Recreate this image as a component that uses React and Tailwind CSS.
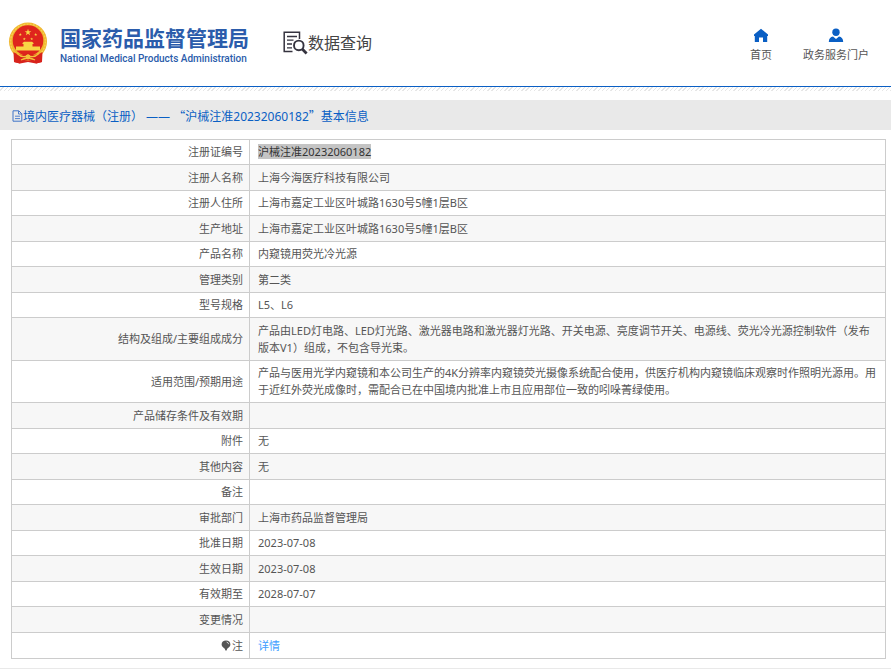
const rows = [
    { label: '注册证编号', value: '沪械注准20232060182', marked: true },
    { label: '注册人名称', value: '上海今海医疗科技有限公司' },
    { label: '注册人住所', value: '上海市嘉定工业区叶城路1630号5幢1层B区' },
    { label: '生产地址', value: '上海市嘉定工业区叶城路1630号5幢1层B区' },
    { label: '产品名称', value: '内窥镜用荧光冷光源' },
    { label: '管理类别', value: '第二类' },
    { label: '型号规格', value: 'L5、L6' },
    { label: '结构及组成/主要组成成分', value: '产品由LED灯电路、LED灯光路、激光器电路和激光器灯光路、开关电源、亮度调节开关、电源线、荧光冷光源控制软件（发布版本V1）组成，不包含导光束。', tall: true },
    { label: '适用范围/预期用途', value: '产品与医用光学内窥镜和本公司生产的4K分辨率内窥镜荧光摄像系统配合使用，供医疗机构内窥镜临床观察时作照明光源用。用于近红外荧光成像时，需配合已在中国境内批准上市且应用部位一致的吲哚菁绿使用。' },
    { label: '产品储存条件及有效期', value: '' },
    { label: '附件', value: '无' },
    { label: '其他内容', value: '无' },
    { label: '备注', value: '' },
    { label: '审批部门', value: '上海市药品监督管理局' },
    { label: '批准日期', value: '2023-07-08' },
    { label: '生效日期', value: '2023-07-08' },
    { label: '有效期至', value: '2028-07-07' },
    { label: '变更情况', value: '' },
];

const STAR = 'M0 -1 L0.24 -0.31 L0.95 -0.31 L0.37 0.12 L0.59 0.81 L0 0.39 L-0.59 0.81 L-0.37 0.12 L-0.95 -0.31 L-0.24 -0.31 Z';

function Emblem() {
    return (
        <svg viewBox="0 0 40 42" className="w-10 h-[42px] shrink-0" aria-hidden="true">
            <path d="M7 30 L33 30 L34 40 L28 41.5 L20 40 L12 41.5 L6 40 Z" fill="#d8231c" />
            <circle cx="20" cy="19.5" r="19" fill="#f0b62e" />
            <circle cx="20" cy="19.5" r="17.4" fill="none" stroke="#f7cf50" strokeWidth="1.4" strokeDasharray="2 1.2" />
            <circle cx="20" cy="18.5" r="15.3" fill="#df251d" />
            <g fill="#f8d545">
                <path d={STAR} transform="translate(20 10.3) scale(3.5)" />
                <path d={STAR} transform="translate(12.3 12.6) scale(1.6)" />
                <path d={STAR} transform="translate(27.7 12.6) scale(1.6)" />
                <path d={STAR} transform="translate(16.3 17) scale(1.6)" />
                <path d={STAR} transform="translate(23.7 17) scale(1.6)" />
                <path d="M14.5 21 L16 19.8 H24 L25.5 21 V22 H24.5 V24.5 H32 V28.6 H8 V24.5 H15.5 V22 H14.5 Z" />
            </g>
            <path d="M5.5 30 Q12 35 20 31 Q28 35 34.5 30 L34 40 L28 41.5 L26 37 Q20 39 14 37 L12 41.5 L6 40 Z" fill="#d8231c" />
            <path d="M9 31.5 Q15 37 20 33 Q25 37 31 31.5" fill="none" stroke="#f3c23a" strokeWidth="1.3" />
            <path d="M13 38 Q20 34 27 38" fill="none" stroke="#f3c23a" strokeWidth="1.3" />
            <circle cx="20" cy="35" r="2.4" fill="#f3c23a" />
        </svg>
    );
}

function SearchDocIcon() {
    return (
        <svg viewBox="0 0 25 24" className="w-[25px] h-6 shrink-0" fill="none" stroke="#35333f" aria-hidden="true">
            <path d="M16.5 8 V1.2 H1.2 V20.5 H9.5" strokeWidth="1.5" />
            <path d="M4 5.5 H14 M4 9.2 H10.5 M4 13 H9 M4 16.8 H9" strokeWidth="1.3" />
            <circle cx="15.8" cy="14.4" r="4.8" strokeWidth="1.9" />
            <path d="M19.2 18 L23.6 22.4" strokeWidth="2.8" />
        </svg>
    );
}

function DocIcon() {
    return (
        <svg viewBox="0 0 11 12" className="w-[11px] h-3 shrink-0" fill="none" stroke="#3f74c8" aria-hidden="true">
            <path d="M1 0.8 H6.8 L9.8 3.8 V11.2 H1 Z" />
            <path d="M6.5 1 V4 H9.6 M3 6.2 H8 M3 8.6 H8" strokeWidth="0.9" />
        </svg>
    );
}

function BulbIcon() {
    return (
        <svg viewBox="0 0 10 11" className="inline-block w-[10px] h-[11px] mr-px align-[-1px]" aria-hidden="true">
            <path d="M5 0.5 C7.6 0.5 9.4 2.2 9.4 4.4 C9.4 6.6 7.2 7.6 6.2 8.8 L5.6 10.4 H4.4 L3.8 8.8 C2.8 7.6 0.6 6.6 0.6 4.4 C0.6 2.2 2.4 0.5 5 0.5 Z" fill="#555" />
            <path d="M5.6 2 Q7.4 2.4 7.7 4.2" fill="none" stroke="#fff" strokeWidth="0.7" />
        </svg>
    );
}

function Header() {
    return (
        <header>
            <div className="flex items-center h-[86px] pl-2 pr-[22px]">
                <a href="#" className="flex items-center gap-3">
                    <Emblem />
                    <div className="pt-[3px] text-[#2b5cab] whitespace-nowrap">
                        <div className="text-[21px] leading-7 font-bold">国家药品监督管理局</div>
                        <div className="font-[Roboto] text-[10px] leading-[14px] font-medium">National Medical Products Administration</div>
                    </div>
                </a>
                <div className="flex items-center ml-[34px] text-[#444]">
                    <SearchDocIcon />
                    <span className="text-[16px] leading-6 whitespace-nowrap">数据查询</span>
                </div>
                <nav className="flex gap-[31px] ml-auto pt-1 whitespace-nowrap text-[11px] leading-4 text-[#555]">
                    <a href="#" className="flex flex-col items-center gap-1">
                        <svg viewBox="0 0 16 15" className="w-4 h-[15px]" fill="#0a5fc4" aria-hidden="true">
                            <path d="M8 0.8 L15 6.5 V8 H14.2 V14 H10 V9.5 H6 V14 H1.8 V8 H1 V6.5 Z" />
                        </svg>
                        首页
                    </a>
                    <a href="#" className="flex flex-col items-center gap-1">
                        <svg viewBox="0 0 16 15" className="w-4 h-[15px]" fill="#0a5fc4" aria-hidden="true">
                            <circle cx="8" cy="4.3" r="3.7" />
                            <path d="M0.8 14 C0.8 10.8 2.4 9 5 8.5 L8 11 L11 8.5 C13.6 9 15.2 10.8 15.2 14 Z" />
                        </svg>
                        政务服务门户
                    </a>
                </nav>
            </div>
            <div className="h-px bg-[#0a5fc4]" />
            <div className="h-1 bg-[repeating-linear-gradient(135deg,#fff_0px,#fff_2px,#e6e6e6_2px,#e6e6e6_3px)]" />
        </header>
    );
}

function App() {
    return (
        <div className="bg-white text-[#555] font-['Noto_Sans','Noto_Sans_CJK_SC',sans-serif]">
            <Header />

            <h1 className="flex items-center mt-[9px] h-[30px] pt-0.5 pl-3 bg-[#e9e9e9] text-[12px] leading-4 text-[#0a5fc4]">
                <DocIcon />
                <span>
                    境内医疗器械（注册） ——{' '}
                    <span className="font-['Noto_Sans_CJK_SC',sans-serif]">“</span>
                    沪械注准20232060182
                    <span className="font-['Noto_Sans_CJK_SC',sans-serif]">”</span>
                    基本信息
                </span>
            </h1>

            <main className="pt-[9px] pl-[11px] pr-[5px] pb-[9px] border-b border-[#e9e9e9]">
                <table className="w-full table-fixed border-collapse border border-[#ccc] text-[11px] leading-[17px]">
                    <colgroup>
                        <col className="w-[238px]" />
                        <col />
                    </colgroup>
                    <tbody>
                        {rows.map((row) => (
                            <tr key={row.label} className={`even:bg-[#f7f7f7] ${row.tall ? 'h-[43px]' : 'even:h-[26px]'}`}>
                                <th scope="row" className="border border-[#ccc] pt-[3px] pb-1 pl-2 pr-[6px] text-right font-normal">{row.label}</th>
                                <td className="border border-[#ccc] pt-[3px] pb-1 pl-2 pr-[6px] break-all">
                                    {row.marked ? <mark className="bg-[#c4c4c4] text-[#333]">{row.value}</mark> : row.value}
                                </td>
                            </tr>
                        ))}
                        <tr className="h-[26px]">
                            <th scope="row" className="border border-[#ccc] pt-[3px] pb-1 pl-2 pr-[6px] text-right font-normal">
                                <BulbIcon />注
                            </th>
                            <td className="border border-[#ccc] pt-[3px] pb-1 pl-2 pr-[6px]">
                                <a href="#" className="text-[#409eff]">详情</a>
                            </td>
                        </tr>
                    </tbody>
                </table>
            </main>
        </div>
    );
}

export default App;
